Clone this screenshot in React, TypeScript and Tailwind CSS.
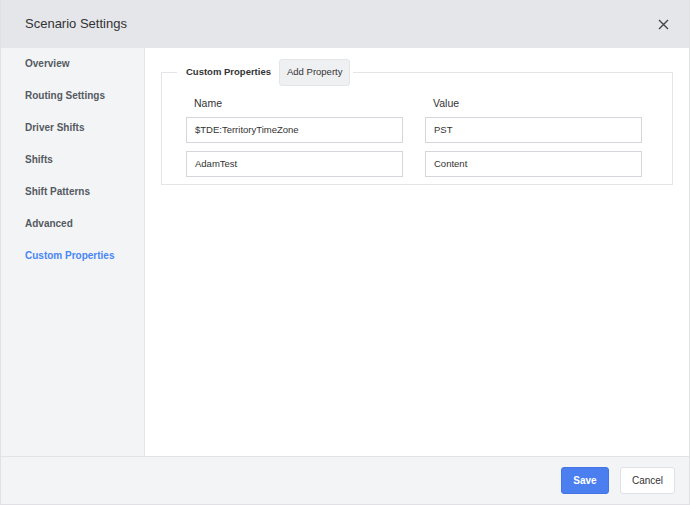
import React from "react";

const navItems = [
  "Overview",
  "Routing Settings",
  "Driver Shifts",
  "Shifts",
  "Shift Patterns",
  "Advanced",
  "Custom Properties",
];

const rows = [
  ["$TDE:TerritoryTimeZone", "PST"],
  ["AdamTest", "Content"],
];

export default function App() {
  return (
    <div
      className="w-[690px] h-[505px] flex flex-col bg-white border-x border-b border-[#dfe1e5] text-[#333]"
      style={{ fontFamily: '"Liberation Sans", Arial, Helvetica, sans-serif' }}
    >
      {/* Header */}
      <div className="h-[48px] shrink-0 bg-[#e4e6ea] flex items-center justify-between pl-[24px] pr-[20px]">
        <div className="text-[13px] text-[#333]">Scenario Settings</div>
        <svg width="11" height="11" viewBox="0 0 11 11" className="text-[#444]">
          <path d="M1 1 L10 10 M10 1 L1 10" stroke="currentColor" strokeWidth="1.4" />
        </svg>
      </div>

      {/* Body */}
      <div className="flex flex-1 min-h-0">
        <div className="w-[144px] shrink-0 bg-[#f3f4f6] border-r border-[#e2e4e8]">
          <div className="-mt-[1px]">
            {navItems.map((item) => (
              <div
                key={item}
                className={
                  "h-[32px] flex items-center pl-[24px] text-[10px] font-bold " +
                  (item === "Custom Properties" ? "text-[#4a86f5]" : "text-[#555a61]")
                }
              >
                {item}
              </div>
            ))}
          </div>
        </div>
        <div className="flex-1 pt-[11px] px-[16px]">
          <fieldset className="border border-[#e3e5e8] pb-[7px]">
            <legend className="ml-[15px] pl-[9px] pr-[3px] flex items-center gap-[8px]">
              <span className="text-[9.5px] font-bold text-[#333]">Custom Properties</span>
              <span className="h-[27px] px-[7px] flex items-center text-[9.5px] text-[#333] bg-[#eff0f2] border border-[#e3e5e8] rounded-[3px]">
                Add Property
              </span>
            </legend>
            <div className="pl-[24px]">
              <div className="pt-[8px] grid grid-cols-[217px_217px] gap-x-[22px]">
                <div className="h-[18px] leading-[18px] pl-[8px] text-[10.5px] text-[#333]">Name</div>
                <div className="h-[18px] leading-[18px] pl-[8px] text-[10.5px] text-[#333]">Value</div>
              </div>
              <div className="mt-[5px] flex flex-col gap-[8px]">
                {rows.map(([n, v]) => (
                  <div key={n} className="grid grid-cols-[217px_217px] gap-x-[22px]">
                    <div className="h-[26px] border border-[#d3d6da] flex items-center pl-[8px] text-[9.5px] text-[#333]">
                      {n}
                    </div>
                    <div className="h-[26px] border border-[#d3d6da] flex items-center pl-[8px] text-[9.5px] text-[#333]">
                      {v}
                    </div>
                  </div>
                ))}
              </div>
            </div>
          </fieldset>
        </div>
      </div>

      {/* Footer */}
      <div className="h-[48px] shrink-0 bg-[#f3f4f6] border-t border-[#e2e4e8] flex items-center justify-end gap-[11px] pr-[14px]">
        <button className="w-[48px] h-[27px] bg-[#4b7ff0] border border-[#4274e6] rounded-[3px] text-white text-[10px] font-bold">
          Save
        </button>
        <button className="w-[55px] h-[27px] bg-white border border-[#dfe1e5] rounded-[3px] text-[#333] text-[10px]">
          Cancel
        </button>
      </div>
    </div>
  );
}
